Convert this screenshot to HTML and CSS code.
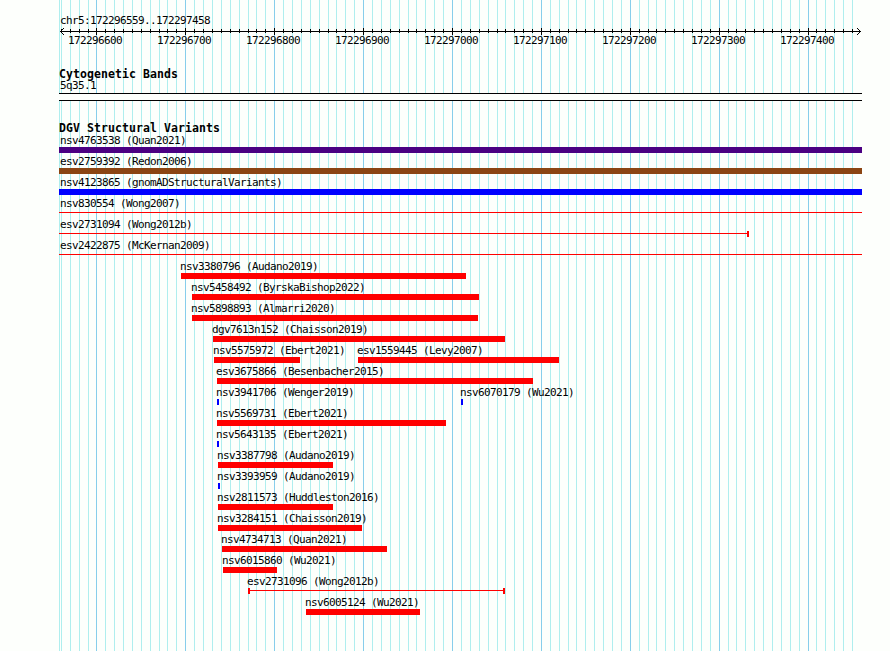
FILE: index.html
```html
<!DOCTYPE html>
<html lang="en">
<head>
    <meta charset="UTF-8">
    <title>chr5:172296559..172297458</title>
    <link rel="stylesheet" href="styles.css">
</head>
<body>

    <!-- Grid lines behind the tracks -->
    <svg class="grid" id="grid" width="890" height="651" shape-rendering="crispEdges"></svg>

    <div class="browser">
        <!-- Ruler -->
        <div class="region">chr5:172296559..172297458</div>
        <svg class="ruler" id="ruler" width="803" height="7" shape-rendering="crispEdges"></svg>
        <div class="scale" id="scale"></div>

        <!-- Cytogenetic Bands -->
        <h2>Cytogenetic Bands</h2>
        <div class="band-label">5q35.1</div>
        <div class="band"></div>

        <!-- DGV Structural Variants -->
        <h2 class="variants-title">DGV Structural Variants</h2>
        <div id="variants"></div>
    </div>

    <script src="script.js"></script>
</body>
</html>
```
FILE: styles.css
```css
body {
    margin: 0;
    height: 651px;
    overflow: hidden;
    background-color: #fdfffc;
    color: #000;
    font-family: "DejaVu Sans Mono", monospace;
    font-size: 11px;
    line-height: 12px;
    letter-spacing: -0.622px;
    white-space: nowrap;
}

/* Sits behind all of the tracks */
.grid {
    position: absolute;
    top: 0;
    left: 0;
    z-index: -1;
}

.browser {
    width: 803px;
    padding: 15px 0 0 59px;
}

.region {
    height: 13px;
    padding-left: 1px;
}

.ruler {
    display: block;
}

.scale {
    display: flex;
    gap: 35px;
    height: 33px;
    padding-left: 9px;
}

.scale span {
    width: 54px;
}

h2 {
    margin: 0;
    height: 12px;
    font-size: 11.5px;
    line-height: 12px;
    font-weight: bold;
    letter-spacing: 0.077px;
}

.band-label {
    height: 13px;
    padding-left: 1px;
}

.band {
    height: 6px;
    border-top: 1px solid #000;
    border-bottom: 1px solid #000;
    background-color: #fdfffc;
}

.variants-title {
    margin-top: 21px;
    height: 13px;
}

/* Features in one row share the same grid cell */
.row {
    display: grid;
    height: 21px;
}

.feature {
    grid-area: 1 / 1;
}

.feature .name {
    height: 12px;
    margin-left: -1px;
}

.feature.clipped .name {
    margin-left: 1px;
}

.bar {
    height: 6px;
    background-color: #ff0000;
}

.bar.gain {
    background-color: #0000ff;
}

.bar.complex {
    background-color: #4b0082;
}

.bar.both {
    background-color: #8b4513;
}

.bar.line {
    box-sizing: border-box;
    background: linear-gradient(#ff0000, #ff0000) 0 2px / 100% 1px no-repeat;
}

.bar.end {
    border-right: 2px solid #ff0000;
}

.bar.start {
    border-left: 2px solid #ff0000;
}
```
FILE: script.js
```javascript
const LEFT = 59;

// [name, start, end, type]
const rows = [
    [["nsv4763538 (Quan2021)", 59, 862, "complex"]],
    [["esv2759392 (Redon2006)", 59, 862, "both"]],
    [["nsv4123865 (gnomADStructuralVariants)", 59, 862, "gain"]],
    [["nsv830554 (Wong2007)", 59, 862, "line"]],
    [["esv2731094 (Wong2012b)", 59, 749, "line end"]],
    [["esv2422875 (McKernan2009)", 59, 862, "line"]],
    [["nsv3380796 (Audano2019)", 181, 466, "loss"]],
    [["nsv5458492 (ByrskaBishop2022)", 192, 479, "loss"]],
    [["nsv5898893 (Almarri2020)", 192, 478, "loss"]],
    [["dgv7613n152 (Chaisson2019)", 213, 505, "loss"]],
    [["nsv5575972 (Ebert2021)", 214, 300, "loss"], ["esv1559445 (Levy2007)", 358, 559, "loss"]],
    [["esv3675866 (Besenbacher2015)", 217, 533, "loss"]],
    [["nsv3941706 (Wenger2019)", 217, 219, "gain"], ["nsv6070179 (Wu2021)", 461, 463, "gain"]],
    [["nsv5569731 (Ebert2021)", 217, 446, "loss"]],
    [["nsv5643135 (Ebert2021)", 217, 219, "gain"]],
    [["nsv3387798 (Audano2019)", 218, 333, "loss"]],
    [["nsv3393959 (Audano2019)", 218, 220, "gain"]],
    [["nsv2811573 (Huddleston2016)", 218, 333, "loss"]],
    [["nsv3284151 (Chaisson2019)", 218, 362, "loss"]],
    [["nsv4734713 (Quan2021)", 222, 387, "loss"]],
    [["nsv6015860 (Wu2021)", 223, 277, "loss"]],
    [["esv2731096 (Wong2012b)", 248, 505, "line start end"]],
    [["nsv6005124 (Wu2021)", 306, 420, "loss"]]
];

// A tick every 10 bases, some steps are 8px instead of 9px
const shortSteps = [4, 12, 22, 31, 40, 50, 58, 67, 76, 85];
const ticks = [];
let x = 61;
for (let i = 0; i < 90; i++) {
    if (i > 0) {
        x += shortSteps.includes(i) ? 8 : 9;
    }
    ticks.push({ x: x, major: i % 10 === 4 });
}

function rect(x, y, width, height, color) {
    return `<rect x="${x}" y="${y}" width="${width}" height="${height}" fill="${color}"/>`;
}

// Grid
let grid = rect(LEFT, 0, 1, 651, "#afeeee");
ticks.forEach(tick => {
    grid += rect(tick.x, 0, 1, 651, tick.major ? "#87ceeb" : "#afeeee");
});
document.getElementById("grid").innerHTML = grid;

// Ruler with an arrow head at both ends
let ruler = rect(1, 3, 801, 1, "#000");
ticks.forEach(tick => {
    ruler += tick.major ? rect(tick.x - LEFT, 0, 1, 7, "#000") : rect(tick.x - LEFT, 1, 1, 4, "#000");
});
for (let i = 1; i < 4; i++) {
    ruler += rect(1 + i, 3 - i, 1, 1, "#000") + rect(1 + i, 3 + i, 1, 1, "#000");
    ruler += rect(801 - i, 3 - i, 1, 1, "#000") + rect(801 - i, 3 + i, 1, 1, "#000");
}
document.getElementById("ruler").innerHTML = ruler;

// Scale numbers
let scale = "";
for (let pos = 172296600; pos <= 172297400; pos += 100) {
    scale += `<span>${pos}</span>`;
}
document.getElementById("scale").innerHTML = scale;

// Variants
let html = "";
rows.forEach(row => {
    html += '<div class="row">';
    row.forEach(([name, start, end, type]) => {
        const clipped = start === LEFT ? " clipped" : "";
        html += `<div class="feature${clipped}" style="margin-left: ${start - LEFT}px">
            <div class="name">${name}</div>
            <div class="bar ${type}" style="width: ${end - start}px"></div>
        </div>`;
    });
    html += "</div>";
});
document.getElementById("variants").innerHTML = html;
```
